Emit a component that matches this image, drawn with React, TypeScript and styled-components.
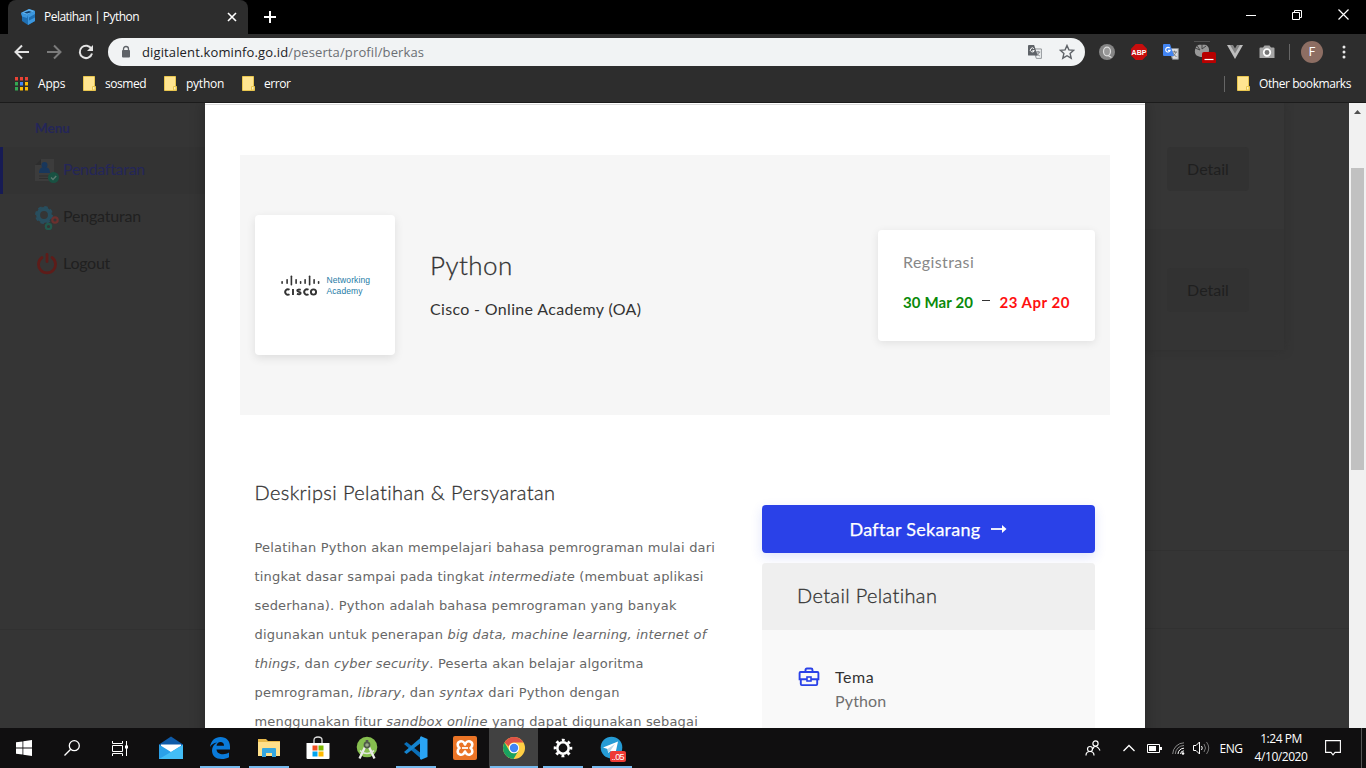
import React from 'react';
import styled, { createGlobalStyle } from 'styled-components';

const GlobalStyle = createGlobalStyle`
  * { box-sizing: border-box; }
  html, body { margin: 0; padding: 0; overflow: hidden; background: #000; }
  svg { display: block; flex: none; }
`;

const uiFont = `"Open Sans", "Noto Sans", sans-serif`;
const siteFont = `Lato, "Open Sans", sans-serif`;

const Screen = styled.div`
  width: 1366px;
  height: 768px;
  display: flex;
  flex-direction: column;
  overflow: hidden;
  font-family: ${uiFont};
`;

/* Text whose tracking is tuned per use */
const Label = styled.span<{ $track?: number }>`
  letter-spacing: ${(p) => p.$track ?? 0}px;
  white-space: nowrap;
`;

/* ---------- browser frame ---------- */
const TabStrip = styled.div`
  height: 34px;
  flex: none;
  display: flex;
  background: #000;
  padding-left: 8px;
`;
const Tab = styled.div`
  width: 240px;
  display: flex;
  align-items: center;
  background: #2d2d2d;
  border-radius: 8px 8px 0 0;
  padding: 0 10px 0 12px;
  color: #fff;
  font-size: 12px;
`;
const TabTitle = styled.div`
  flex: 1;
  margin-left: 8px;
  line-height: 34px;
`;
const NewTab = styled.div`
  flex: 1;
  display: flex;
  align-items: center;
  padding-left: 15px;
`;
const WindowButtons = styled.div`
  display: flex;
  width: 138px;
  height: 29px;
`;
const WindowButton = styled.div`
  width: 46px;
  display: flex;
  align-items: center;
  justify-content: center;
`;

const Toolbar = styled.div`
  height: 36px;
  flex: none;
  display: flex;
  align-items: center;
  background: #2d2d2d;
  padding-left: 6px;
`;
const ToolCell = styled.div<{ $w?: number }>`
  width: ${(p) => p.$w ?? 32}px;
  height: 32px;
  flex: none;
  display: flex;
  align-items: center;
  justify-content: center;
`;
const Omnibox = styled.div`
  width: 977px;
  height: 28px;
  margin: 0 6px;
  border-radius: 14px;
  background: #f1f3f4;
  display: flex;
  align-items: center;
  padding: 0 2px 0 12px;
`;
const Url = styled.div`
  flex: 1;
  margin-left: 10px;
  font-size: 13px;
  line-height: 28px;
  color: #202124;
  em { font-style: normal; color: #6a6e73; }
`;
const Divider = styled.i<{ $h: number; $after?: number }>`
  width: 1px;
  height: ${(p) => p.$h}px;
  margin-right: ${(p) => p.$after ?? 0}px;
  background: #666;
`;
const Avatar = styled.div`
  width: 22px;
  height: 22px;
  border-radius: 50%;
  background: #8d6e63;
  color: #fff;
  font: 12px/22px Roboto, sans-serif;
  text-align: center;
`;

const Bookmarks = styled.div`
  height: 33px;
  flex: none;
  display: flex;
  align-items: center;
  background: #2d2d2d;
  border-bottom: 1px solid #1b1b1b;
  padding: 0 15px 5px;
  color: #fff;
  font-size: 12px;
`;
const Bookmark = styled.div<{ $w?: number; $gap: number }>`
  display: flex;
  align-items: center;
  gap: ${(p) => p.$gap}px;
  width: ${(p) => (p.$w ? p.$w + 'px' : 'auto')};
`;
const Spacer = styled.div`flex: 1;`;

/* ---------- page ---------- */
const Viewport = styled.div`
  height: 625px;
  flex: none;
  display: grid;
  grid-template-columns: 205px 940px 204px 17px;
  overflow: hidden;
  background: #353535;
  font-family: ${siteFont};
  font-variant-ligatures: none;
`;
const Sidebar = styled.aside`
  display: flex;
  flex-direction: column;
  font-size: 16px;
`;
const MenuTitle = styled.div`
  height: 44px;
  padding: 13px 0 0 35px;
  font-size: 13.5px;
  font-weight: 700;
  line-height: 24px;
  color: #242659;
`;
const MenuItem = styled.div<{ $active?: boolean }>`
  height: 47px;
  display: flex;
  align-items: center;
  gap: 4px;
  padding-left: 32px;
  border-left: 3px solid ${(p) => (p.$active ? '#171b54' : 'transparent')};
  background: ${(p) => (p.$active ? '#333' : 'transparent')};
  color: ${(p) => (p.$active ? '#242659' : '#202020')};
`;
const MenuLabel = styled(Label)`
  padding-bottom: 4px;
`;
const SideFooter = styled.div`
  margin-top: 341px;
  border-top: 1px solid #313131;
`;

const Modal = styled.main`
  position: relative;
  background: #fff;
  box-shadow: 0 0 14px rgba(0, 0, 0, 0.3);
  padding: 1px 0 0;
`;
const ModalRule = styled.div`
  height: 1px;
  background: #dcdcdc;
`;
const Hero = styled.section`
  margin: 50px 35px 0;
  height: 260px;
  padding: 0 15px;
  background: #f6f6f6;
  display: flex;
  align-items: center;
  color: #333;
`;
const LogoCard = styled.div`
  width: 140px;
  height: 140px;
  border-radius: 4px;
  background: #fff;
  box-shadow: 0 3px 10px rgba(0, 0, 0, 0.1);
  display: flex;
  align-items: center;
  justify-content: center;
  padding: 3px 0 0 3px;
`;
const HeroText = styled.div`
  flex: 1;
  margin-left: 35px;
  display: flex;
  flex-direction: column;
  gap: 14px;
  padding-bottom: 2px;
`;
const HeroTitle = styled.h1`
  margin: 0;
  font-size: 26px;
  font-weight: 300;
  line-height: 36px;
  -webkit-text-stroke: 0.3px #333;
`;
const HeroSub = styled.div`
  font-size: 16px;
  line-height: 24px;
`;
const DateCard = styled.div`
  width: 217px;
  height: 111px;
  margin-top: 1px;
  border-radius: 4px;
  background: #fff;
  box-shadow: 0 2px 8px rgba(0, 0, 0, 0.09);
  padding: 20px 25px 0;
  font-size: 16px;
  line-height: 24px;
  color: #888;
`;
const Dates = styled.div`
  display: flex;
  margin-top: 16px;
  font-size: 15px;
  font-weight: 700;
`;
const DateText = styled(Label)<{ $color: string }>`
  color: ${(p) => p.$color};
`;
const Dash = styled.i`
  width: 8px;
  height: 1px;
  margin: 10px 9.5px 0 9px;
  background: #333;
`;

const Columns = styled.div`
  display: flex;
  justify-content: space-between;
  padding: 0 50px 0 49.5px;
`;
const Description = styled.article`
  width: 480px;
  padding-top: 62px;
`;
const SectionTitle = styled.h2`
  margin: 0;
  font-size: 20px;
  font-weight: 300;
  line-height: 30px;
  color: #333;
  -webkit-text-stroke: 0.3px #333;
`;
const Paragraph = styled.p`
  margin: 26px 0 0;
  font-family: "DejaVu Sans", sans-serif;
  font-size: 13px;
  line-height: 29px;
  color: #666;
`;
const Line = styled.span<{ $track: number }>`
  display: block;
  white-space: nowrap;
  letter-spacing: ${(p) => p.$track}px;
`;
const Side = styled.aside`
  width: 333px;
  padding-top: 90px;
`;
const Apply = styled.div`
  height: 48px;
  border-radius: 4px;
  background: #2a41e8;
  box-shadow: 0 4px 12px rgba(42, 65, 232, 0.15);
  color: #fff;
  font-size: 18px;
  -webkit-text-stroke: 0.25px #fff;
  display: flex;
  align-items: center;
  justify-content: center;
  gap: 11px;
`;
const DetailBox = styled.div`
  margin-top: 10px;
  border-radius: 4px;
  background: #f9f9f9;
  height: 200px;
`;
const DetailHead = styled.div`
  height: 67px;
  border-radius: 4px 4px 0 0;
  background: #efefef;
  padding-left: 35px;
  font-size: 20px;
  font-weight: 300;
  line-height: 65px;
  color: #333;
  -webkit-text-stroke: 0.3px #333;
`;
const DetailRow = styled.div`
  display: flex;
  padding: 35px 0 0 36px;
  gap: 15px;
  font-size: 16px;
  line-height: 24px;
  color: #333;
  svg { margin-top: 2px; }
`;
const DetailValue = styled.div`color: #707070;`;

const Behind = styled.div`
  display: flex;
  flex-direction: column;
`;
const Card = styled.div`
  width: 139px;
  height: 247px;
  background: #363636;
  border-radius: 0 0 4px 0;
  box-shadow: 0 0 8px #2f2f2f;
`;
const CardRow = styled.div<{ $h: number; $top: number }>`
  height: ${(p) => p.$h}px;
  padding: ${(p) => p.$top}px 0 0 22px;
  background: ${(p) => (p.$top === 44 ? '#363636' : '#343434')};
`;
const DetailButton = styled.div`
  width: 82px;
  height: 44px;
  border-radius: 4px;
  background: #323232;
  color: #1f1f1f;
  font-size: 16px;
  line-height: 43px;
  text-align: center;
`;
const BehindFooter = styled.div`
  margin-top: 200px;
  height: 79px;
  border-top: 1px solid #313131;
  border-bottom: 1px solid #313131;
`;

const Scrollbar = styled.div`
  background: #f1f1f1;
  display: flex;
  flex-direction: column;
  align-items: center;
`;
const Arrow = styled.div`
  height: 17px;
  display: flex;
  align-items: center;
`;
const Thumb = styled.div`
  width: 13px;
  height: 302px;
  margin-top: 48px;
  margin-bottom: auto;
  background: #c1c1c1;
`;

/* ---------- taskbar ---------- */
const Taskbar = styled.footer`
  height: 40px;
  flex: none;
  display: flex;
  background: #100f10;
  color: #fff;
  font-size: 12px;
`;
const TaskCell = styled.div<{ $w: number; $active?: boolean }>`
  width: ${(p) => p.$w}px;
  display: flex;
  align-items: center;
  justify-content: center;
  background: ${(p) => (p.$active ? '#414141' : 'transparent')};
`;
const AppCell = styled(TaskCell)<{ $open?: boolean; $line?: number }>`
  flex-direction: column;
  justify-content: space-between;
  &::before {
    content: '';
    height: 2px;
  }
  &::after {
    content: '';
    width: ${(p) => p.$line ?? 40}px;
    height: 2px;
    background: ${(p) => (p.$open ? '#76b9ed' : 'transparent')};
  }
`;
const Tray = styled.div`
  margin-left: auto;
  display: flex;
  align-items: center;
`;
const Clock = styled.div`
  width: 57px;
  text-align: center;
  font-size: 12px;
  line-height: 18px;
  padding-right: 3px;
`;
const ShowDesktop = styled.div`
  width: 5px;
  height: 40px;
  border-left: 1px solid #555;
`;

/* ---------- drawings ---------- */
const Favicon = () => (
  <svg width="16" height="16" viewBox="0 0 16 16">
    <path d="M1 4 9 0l6 2v10l-7 4-6-4V7z" fill="#1f6fb2" />
    <path d="M1 4 9 0l6 2-8 4z" fill="#5bb0ee" />
    <path d="M4 3.5 9 2l3 1-5 1.6z" fill="#123f6b" />
    <path d="m1 4 6 2v3L2 7.500z M7 6l8-4v3L9 8.500v3l6-3v3.500L8 16V9z" fill="#3c97de" />
  </svg>
);
const FolderNote = () => (
  <svg width="13" height="15" viewBox="0 0 13 15">
    <path d="M.5.5h11v10h1v4H.5z" fill="#ffe591" stroke="#e9c64f" />
    <path d="M9.500 10.500h2.500v3.500h-2.500z" fill="#fff0b8" stroke="#e9c64f" />
  </svg>
);
const AppsGrid = () => {
  const colors = ['#ea4335', '#ea4335', '#ea4335', '#34a853', '#4285f4', '#fbbc05', '#34a853', '#fbbc05', '#fbbc05'];
  return (
    <svg width="13" height="14" viewBox="0 0 13 14">
      {colors.map((c, i) => (
        <rect key={i} x={(i % 3) * 5} y={Math.floor(i / 3) * 5} width="3" height="3.500" fill={c} />
      ))}
    </svg>
  );
};
const Translate = ({ color, size = 16 }: { color: string; size?: number }) => (
  <svg width={size} height={size} viewBox="0 0 16 16">
    <path d="M6 4.500h9.300v10.800H9.500z" fill={color === '#5f6368' ? '#f1f3f4' : '#dadce0'} stroke="#85898d" />
    <path d="M9 8h5M11.500 6.700V8M13 8c-.5 2-2 3.500-3.500 4.300M10 9c.6 1.600 2 3 3.500 3.500" fill="none" stroke="#73777b" />
    <path d="M0 1q0-1 1-1h6l4 12H1q-1 0-1-1z" fill={color} />
    <path d="M6.800 4.200a2.300 2.300 0 1 0 .4 2.200H5" fill="none" stroke="#fff" strokeWidth="1.100" />
  </svg>
);
const CiscoLogo = () => {
  const bars = [[0, 6, 3], [5, 4, 5], [9.3, 0.5, 10], [14, 4, 5], [18.5, 6, 3], [23, 4, 5], [27.5, 0.5, 10], [32, 4, 5], [36.5, 6, 3]];
  return (
    <svg width="92" height="24" viewBox="0 0 92 24">
      {bars.map(([x, y, h], i) => (
        <rect key={i} x={x + 0.3} y={y} width="1.600" height={h} rx=".7" fill="#333" />
      ))}
      <g fill="none" stroke="#333" strokeWidth="1.900">
        <path d="M8.500 14.800a2.700 2.700 0 1 0 0 4.400M12 14v6M19.700 14.900c-1.300-.5-3.500-.6-3.500.7 0 1.600 3.500.8 3.500 2.500 0 1.500-2.300 1.300-3.800.8M27.500 14.800a2.700 2.700 0 1 0 0 4.400" />
        <circle cx="32.500" cy="17" r="2.600" />
      </g>
      <text x="45.500" y="8.200" fontFamily="Liberation Sans, sans-serif" fontSize="8.500" textLength="43.500" fill="#1d7ba6">Networking</text>
      <text x="45.500" y="18.500" fontFamily="Liberation Sans, sans-serif" fontSize="8.500" textLength="36" fill="#1d7ba6">Academy</text>
    </svg>
  );
};
const RegIcon = () => (
  <svg width="24" height="24" viewBox="0 0 24 24">
    <path d="M0 6 6 0h13v22H0z" fill="#3c3c3c" />
    <path d="M0 6 6 0v6z" fill="#2d2d2d" />
    <path d="M4 17h12M4 19.500h9" stroke="#2f2f2f" />
    <circle cx="9.500" cy="6" r="3" fill="#18375c" />
    <path d="M4 14c0-4 2-6 5.500-6s5.500 2 5.500 6z" fill="#18375c" />
    <circle cx="18.500" cy="18.500" r="5.500" fill="#195142" />
    <path d="m16 18.500 2 2 3.200-3.500" stroke="#5b7a70" strokeWidth="1.400" fill="none" />
  </svg>
);
const GearsIcon = () => (
  <svg width="24" height="24" viewBox="0 0 24 24" fill="none">
    <circle cx="9" cy="9" r="5.900" stroke="#284e5e" strokeWidth="4" />
    <circle cx="9" cy="9" r="8" stroke="#284e5e" strokeWidth="2" strokeDasharray="3.600 2.680" />
    <circle cx="20" cy="14" r="2.700" stroke="#6b302e" strokeWidth="2.200" />
    <circle cx="13.500" cy="20.500" r="2.700" stroke="#22594d" strokeWidth="2.200" />
  </svg>
);
const PowerIcon = () => (
  <svg width="24" height="24" viewBox="0 0 24 24" fill="none" stroke="#5e1c19" strokeWidth="2.800" strokeLinecap="round">
    <path d="M7 4.500a8.500 8.500 0 1 0 10 0M12 1.500v7" />
  </svg>
);
const Briefcase = () => (
  <svg width="22" height="20" viewBox="0 0 22 20" fill="none" stroke="#2a41e8" strokeWidth="1.900">
    <path d="M7.500 5V3q0-1.500 1.500-1.500h4q1.500 0 1.500 1.500v2" />
    <path d="M2.500 5h17q.9 0 .9.900v6.300H1.600V5.900q0-.9.900-.9zM2.800 12.500v4.600q0 1 1 1h14.400q1 0 1-1v-4.600" />
    <rect x="9" y="10" width="4" height="4" fill="#f9f9f9" strokeWidth="1.600" />
  </svg>
);

const MailIcon = () => (
  <svg width="24" height="24" viewBox="0 0 24 24">
    <path d="m0 8.500 12-8 12 8V23H0z" fill="#0f5ba8" />
    <path d="M2 8.500h20v8H2z" fill="#fff" />
    <path d="m0 8.500 12 7.500L24 8.500V23H0z" fill="#2ba0e8" />
    <path d="m0 23 24-14v14z" fill="#43bdf6" />
  </svg>
);
const EdgeIcon = () => (
  <svg width="22" height="24" viewBox="0 0 22 24">
    <path d="M1 11C2 4.500 6 1 11.500 1 17.500 1 21 5 21 10.500v3H7.500c.2 3.200 3 4.800 6.500 4.800 2.300 0 4.300-.6 6-1.700v4.600C18 22.300 15.600 23 12.700 23 6.500 23 3 19.500 3 14.500c0-3.500 2-6.500 5-8C4.800 7 2.500 8.500 1 11zm6.500-1.300H15C15 7.300 13.700 6 11.500 6s-3.600 1.400-4 3.700z" fill="#0a7ad9" />
  </svg>
);
const ExplorerIcon = () => (
  <svg width="22" height="20" viewBox="0 1 22 20">
    <path d="M0 2h8l2 2h12v15H0z" fill="#e8b94a" />
    <path d="M0 5h22v14H0z" fill="#ffe08a" />
    <path d="M4 12q0-1 1-1h12q1 0 1 1v8h-4v-4H8v4H4z" fill="#35a7df" />
  </svg>
);
const StoreIcon = () => (
  <svg width="24" height="24" viewBox="0 0 24 24">
    <path d="M8 7V4q0-3 4-3t4 3v3" fill="none" stroke="#ddd" strokeWidth="1.300" />
    <path d="M.5 7h23v15q0 1-1 1h-21q-1 0-1-1z" fill="#fff" />
    <path d="M6.500 9.500h5v5h-5z" fill="#f25022" /><path d="M12.500 9.500h5v5h-5z" fill="#7fba00" />
    <path d="M6.500 15.500h5v5h-5z" fill="#00a4ef" /><path d="M12.500 15.500h5v5h-5z" fill="#ffb900" />
  </svg>
);
const AndroidStudio = () => (
  <svg width="22" height="24" viewBox="0 0 22 24">
    <circle cx="11" cy="11" r="10.300" fill="#86be4f" />
    <path d="M9.500 10 3.500 22.500M12.500 10l6 12.500" stroke="#ececec" strokeWidth="2.300" />
    <path d="M4 14.500c4 4 10 4 14 0" stroke="#dfe5da" strokeWidth="1.600" fill="none" />
    <path d="M11 4v4" stroke="#555" strokeWidth="2.600" />
    <circle cx="11" cy="9" r="2.600" fill="#9aa88c" stroke="#4f5a48" strokeWidth="1.600" />
  </svg>
);
const CodeIcon = () => (
  <svg width="25" height="24" viewBox="0 0 25 24">
    <path d="m1 8 2.500-2L19 18v5.500z" fill="#0b6fb8" />
    <path d="m1 16 2.500 2L19 6V.5z" fill="#1584cf" />
    <path d="m18 .3 6.500 2.700v18L18 23.700l-1-1V1.300z" fill="#2aa4f4" />
  </svg>
);
const XamppIcon = () => (
  <svg width="24" height="24" viewBox="0 0 24 24">
    <rect width="24" height="24" rx="2" fill="#ea7426" />
    <path d="M12 8.500C11 5.500 8.500 5 7 5.500 4 6.500 4 10.500 6.500 12 4 13.500 4 17.500 7 18.500c1.500.5 4 0 5-3 1 3 3.500 3.500 5 3 3-1 3-5 .5-6.500 2.500-1.500 2.500-5.500-.5-6.500-1.500-.5-4 0-5 3z" fill="none" stroke="#fff" strokeWidth="2.600" strokeLinejoin="round" />
    <path d="M9 12h6" stroke="#fff" strokeWidth="1.800" />
  </svg>
);
const ChromeIcon = () => (
  <svg width="22" height="22" viewBox="0 0 22 22">
    <circle cx="11" cy="11" r="11" fill="#ffce44" />
    <path d="M1.500 5.500A11 11 0 0 1 20.500 5.500H11a5.500 5.500 0 0 0-5.300 4z" fill="#de5246" />
    <path d="M1.500 5.500A11 11 0 0 0 10.500 22l5-8.300a5.300 5.300 0 0 1-9.200 0z" fill="#1aa260" />
    <circle cx="11" cy="11" r="5.200" fill="#fff" /><circle cx="11" cy="11" r="4.200" fill="#4285f4" />
  </svg>
);
const SettingsIcon = () => (
  <svg width="20" height="22" viewBox="0 0 20 22" fill="none" stroke="#fff">
    <circle cx="10" cy="11" r="5.700" strokeWidth="2.600" />
    <circle cx="10" cy="11" r="8" strokeWidth="2.600" strokeDasharray="2.900 3.383" strokeDashoffset="1.450" />
  </svg>
);
const TelegramIcon = () => (
  <svg width="28" height="28" viewBox="0 -2 28 28">
    <circle cx="13.500" cy="11.500" r="10.800" fill="#259bd5" />
    <path d="m5 11.500 15-6-2.800 13-4.500-3.500-2.500 2-.7-4z" fill="#fff" />
    <path d="m9.500 13 7.500-5-4.500 6.500-2.300 2.500z" fill="#b9d7e8" />
    <rect x="12" y="15" width="16" height="11" rx="2" fill="#ee3b35" />
    <text x="13.500" y="24" fontFamily="Liberation Sans, sans-serif" fontSize="9" textLength="13" fill="#fff">..05</text>
  </svg>
);

const detailButtons = [{ h: 126, top: 44 }, { h: 121, top: 39 }];
const extraIcons = [
  <svg key="q" width="16" height="16" viewBox="0 0 16 16"><circle cx="8" cy="8" r="8" fill="#858585" /><ellipse cx="8" cy="7.500" rx="3.500" ry="4.300" fill="#999" stroke="#ddd" strokeWidth="1.200" /><path d="m9 11.500 3.500 2" stroke="#ddd" strokeWidth="1.200" /></svg>,
  <svg key="abp" width="20" height="16" viewBox="-2 0 20 16"><path d="M4.700 0h6.600L16 4.700v6.600L11.300 16H4.700L0 11.300V4.700z" fill="#c70d0d" /><text x="8" y="10.800" textAnchor="middle" fontFamily="Liberation Sans, sans-serif" fontWeight="700" fontSize="7" fill="#fff">ABP</text></svg>,
  <Translate key="tr" color="#4285f4" />,
  <svg key="bug" width="28" height="22" viewBox="-1 -3 28 22"><path d="M4-2.500h16" stroke="#505050" /><path d="M5 6c1-5 4-6 7-5 4-1 7 1 7 5s-3 7-7 7-8-2-7-7z" fill="#999" /><path d="M7 1.500 10 6 5 4M12 0v5l4-3" stroke="#444" fill="none" /><rect x="12" y="8" width="14" height="11.500" rx="2" fill="#b80000" /><path d="M14.500 15.500H23.500" stroke="#fff" strokeWidth="1.200" /></svg>,
  <svg key="vue" width="16" height="14" viewBox="0 0 16 14"><path d="M0 0h5l3 5 3-5h5L8 14z" fill="#bdbdbd" /><path d="M3 0h3l2 3.500L10 0h3L8 8.500z" fill="#858585" /></svg>,
  <svg key="cam" width="16" height="14" viewBox="0 0 16 14"><path d="M1.500 2.500H4L5.500.5h5L12 2.500h2.500q1 0 1 1V13H.5V3.500q0-1 1-1z" fill="#a6a6a6" /><circle cx="8" cy="7.500" r="3.300" fill="#777" stroke="#fff" strokeWidth="1.700" /></svg>,
];

export default function App() {
  return (
    <Screen>
      <GlobalStyle />
      <TabStrip>
        <Tab>
          <Favicon />
          <TabTitle><Label $track={-0.53}>Pelatihan | Python</Label></TabTitle>
          <svg width="12" height="12" viewBox="0 0 12 12"><path d="m2 2 8 8M10 2l-8 8" stroke="#fff" strokeWidth="1.600" /></svg>
        </Tab>
        <NewTab><svg width="14" height="14" viewBox="0 0 14 14"><path d="M7 1v12M1 7h12" stroke="#fff" strokeWidth="2" /></svg></NewTab>
        <WindowButtons>
          <WindowButton><svg width="10" height="10"><path d="M0 5.500h10" stroke="#fff" /></svg></WindowButton>
          <WindowButton><svg width="10" height="10" fill="none" stroke="#fff"><path d="M.5 2.500h7v7h-7zM2.500 2.500v-2h7v7h-2" /></svg></WindowButton>
          <WindowButton><svg width="11" height="11"><path d="m.5.5 10 10M10.500.5l-10 10" stroke="#fff" strokeWidth="1.200" /></svg></WindowButton>
        </WindowButtons>
      </TabStrip>

      <Toolbar>
        <ToolCell><svg width="16" height="16" viewBox="0 0 16 16" fill="none" stroke="#e4e4e4" strokeWidth="2"><path d="M15 8H2.500M8 1.500 1.500 8 8 14.500" /></svg></ToolCell>
        <ToolCell><svg width="16" height="16" viewBox="0 0 16 16" fill="none" stroke="#7b7b7b" strokeWidth="2"><path d="M1 8h12.500M8 1.500 14.500 8 8 14.500" /></svg></ToolCell>
        <ToolCell><svg width="16" height="16" viewBox="0 0 16 16"><path d="M13.500 5A6.200 6.200 0 1 0 14 9.500" fill="none" stroke="#e4e4e4" strokeWidth="2" /><path d="M15 1v6H9z" fill="#e4e4e4" /></svg></ToolCell>
        <Omnibox>
          <svg width="12" height="14" viewBox="0 0 12 14"><rect x="2" y="5" width="8" height="7.500" rx="1" fill="#5f6368" /><path d="M3.500 6V4q0-2.500 2.500-2.500T8.500 4v2" fill="none" stroke="#5f6368" strokeWidth="1.300" /></svg>
          <Url><Label $track={0.13}>digitalent.kominfo.go.id<em>/peserta/profil/berkas</em></Label></Url>
          <ToolCell><Translate color="#5f6368" size={14} /></ToolCell>
          <ToolCell><svg width="16" height="16" viewBox="0 0 16 16"><path d="m8 1.500 1.900 4.400 4.800.4-3.600 3.200 1.100 4.700L8 11.700l-4.200 2.500 1.100-4.700L1.300 6.300l4.800-.4z" fill="none" stroke="#5f6368" strokeWidth="1.400" /></svg></ToolCell>
        </Omnibox>
        {extraIcons.map((icon, i) => <ToolCell key={i}>{icon}</ToolCell>)}
        <ToolCell $w={13}><Divider $h={16} /></ToolCell>
        <ToolCell $w={32}><Avatar>F</Avatar></ToolCell>
        <ToolCell $w={32}><svg width="4" height="14" fill="#e8e8e8"><circle cx="2" cy="2" r="1.500" /><circle cx="2" cy="7" r="1.500" /><circle cx="2" cy="12" r="1.500" /></svg></ToolCell>
      </Toolbar>

      <Bookmarks>
        <Bookmark $w={68} $gap={10}><AppsGrid /><Label $track={-0.2}>Apps</Label></Bookmark>
        <Bookmark $w={81} $gap={9}><FolderNote /><Label $track={-0.45}>sosmed</Label></Bookmark>
        <Bookmark $w={78} $gap={9}><FolderNote /><Label $track={-0.25}>python</Label></Bookmark>
        <Bookmark $gap={9}><FolderNote /><Label $track={-0.45}>error</Label></Bookmark>
        <Spacer />
        <Bookmark $gap={9}><Divider $h={16} $after={3} /><FolderNote /><Label $track={-0.44}>Other bookmarks</Label></Bookmark>
      </Bookmarks>

      <Viewport>
        <Sidebar>
          <MenuTitle><Label>Menu</Label></MenuTitle>
          <MenuItem $active><RegIcon /><MenuLabel $track={-0.3}>Pendaftaran</MenuLabel></MenuItem>
          <MenuItem><GearsIcon /><MenuLabel $track={-0.2}>Pengaturan</MenuLabel></MenuItem>
          <MenuItem><PowerIcon /><MenuLabel $track={-0.25}>Logout</MenuLabel></MenuItem>
          <SideFooter />
        </Sidebar>

        <Modal>
          <ModalRule />
          <Hero>
            <LogoCard><CiscoLogo /></LogoCard>
            <HeroText>
              <HeroTitle><Label $track={0.45}>Python</Label></HeroTitle>
              <HeroSub><Label $track={0.33}>Cisco - Online Academy (OA)</Label></HeroSub>
            </HeroText>
            <DateCard>
              <Label $track={0.4}>Registrasi</Label>
              <Dates>
                <DateText $color="#0a8a0a" $track={0.12}>30 Mar 20</DateText>
                <Dash />
                <DateText $color="#ff1010" $track={0.5}>23 Apr 20</DateText>
              </Dates>
            </DateCard>
          </Hero>
          <Columns>
            <Description>
              <SectionTitle><Label $track={0.4}>Deskripsi Pelatihan &amp; Persyaratan</Label></SectionTitle>
              <Paragraph>
                <Line $track={0.2}>Pelatihan Python akan mempelajari bahasa pemrograman mulai dari</Line>
                <Line $track={0.19}>tingkat dasar sampai pada tingkat <em>intermediate</em> (membuat aplikasi</Line>
                <Line $track={0.2}>sederhana). Python adalah bahasa pemrograman yang banyak</Line>
                <Line $track={0.19}>digunakan untuk penerapan <em>big data, machine learning, internet of</em></Line>
                <Line $track={0.2}><em>things</em>, dan <em>cyber security</em>. Peserta akan belajar algoritma</Line>
                <Line $track={0.21}>pemrograman, <em>library</em>, dan <em>syntax</em> dari Python dengan</Line>
                <Line $track={0.18}>menggunakan fitur <em>sandbox online</em> yang dapat digunakan sebagai</Line>
              </Paragraph>
            </Description>
            <Side>
              <Apply>
                <Label $track={0.27}>Daftar Sekarang</Label>
                <svg width="16" height="10" viewBox="0 0 16 10"><path d="M0 5h12" stroke="#fff" strokeWidth="1.800" /><path d="m11 1 4.500 4L11 9z" fill="#fff" /></svg>
              </Apply>
              <DetailBox>
                <DetailHead><Label $track={0.35}>Detail Pelatihan</Label></DetailHead>
                <DetailRow>
                  <Briefcase />
                  <div><Label $track={0.55}>Tema</Label><DetailValue><Label $track={0.15}>Python</Label></DetailValue></div>
                </DetailRow>
              </DetailBox>
            </Side>
          </Columns>
        </Modal>

        <Behind>
          <Card>
            {detailButtons.map((b) => (
              <CardRow key={b.top} $h={b.h} $top={b.top}><DetailButton><Label>Detail</Label></DetailButton></CardRow>
            ))}
          </Card>
          <BehindFooter />
        </Behind>

        <Scrollbar>
          <Arrow><svg width="7" height="4"><path d="M0 4 3.500 0 7 4z" fill="#505050" /></svg></Arrow>
          <Thumb />
          <Arrow><svg width="7" height="4"><path d="M0 0h7L3.500 4z" fill="#505050" /></svg></Arrow>
        </Scrollbar>
      </Viewport>

      <Taskbar>
        <TaskCell $w={48}><svg width="16" height="16" viewBox="0 0 16 16" fill="#fff"><path d="M0 2.300 6.500 1.400v6.200H0zM7.300 1.300 16 0v7.600H7.300zM0 8.400h6.500v6.200L0 13.700zM7.300 8.400H16V16l-8.700-1.300z" /></svg></TaskCell>
        <TaskCell $w={48}><svg width="16" height="16" viewBox="0 0 16 16" fill="none" stroke="#fff" strokeWidth="1.300"><circle cx="10.300" cy="5.700" r="5" /><path d="M6.700 9.300.5 15.500" /></svg></TaskCell>
        <TaskCell $w={49}><svg width="17" height="15" viewBox="0 0 17 15" fill="none" stroke="#fff"><path d="M.5 0v2.500h10V0M.5 15v-2.500h10V15M.5 4.500h10v6H.5zM14.500 0v15" /><path d="M13 4.500h3v3h-3z" fill="#fff" stroke="none" /></svg></TaskCell>
        <TaskCell $w={1} />
        <AppCell $w={49}><MailIcon /></AppCell>
        <AppCell $w={49} $open><EdgeIcon /></AppCell>
        <AppCell $w={49} $open><ExplorerIcon /></AppCell>
        <AppCell $w={49}><StoreIcon /></AppCell>
        <AppCell $w={49}><AndroidStudio /></AppCell>
        <AppCell $w={49} $open><CodeIcon /></AppCell>
        <AppCell $w={49}><XamppIcon /></AppCell>
        <AppCell $w={49} $open $active $line={48}><ChromeIcon /></AppCell>
        <AppCell $w={49} $open><SettingsIcon /></AppCell>
        <AppCell $w={49} $open><TelegramIcon /></AppCell>
        <Tray>
          <TaskCell $w={38}><svg width="16" height="16" viewBox="0 0 16 16" fill="none" stroke="#fff" strokeWidth="1.200"><circle cx="10.500" cy="3.500" r="2.600" /><path d="M8 9q0-2.500 2.500-2.500T15 10.500" /><circle cx="5" cy="9" r="2.500" /><path d="M1 15.500q0-4 4-4t4 4" /></svg></TaskCell>
          <TaskCell $w={34}><svg width="12" height="8" fill="none" stroke="#fff" strokeWidth="1.300"><path d="m.5 7 5.500-5.500L11.500 7" /></svg></TaskCell>
          <TaskCell $w={16}><svg width="15" height="9"><path d="M.5.500h12v8H.5z" fill="none" stroke="#fff" /><path d="M2 2h7v5H2zM13 3h2v3h-2z" fill="#fff" /></svg></TaskCell>
          <TaskCell $w={32}><svg width="13" height="13" viewBox="0 0 13 13" fill="none"><path d="M.7 12A11.500 11.500 0 0 1 12 .8M3.300 12A8.800 8.800 0 0 1 12 3.500" stroke="#888" /><path d="M6 12a6 6 0 0 1 6-5.800M8.500 12A3.500 3.500 0 0 1 12 8.800" stroke="#fff" /><circle cx="11" cy="11.500" r="1.300" fill="#fff" /></svg></TaskCell>
          <TaskCell $w={14}><svg width="17" height="14" viewBox="0 0 17 14" fill="none" stroke="#fff"><path d="M.5 4.500h2.500L6.500 1v12L3 9.500H.5zM8.500 5q1.500 2 0 4" /><path d="M11 3q3 4 0 8M13.500 1q4.500 6 0 12" stroke="#777" /></svg></TaskCell>
          <TaskCell $w={46}><Label $track={-0.4}>ENG</Label></TaskCell>
          <Clock><Label $track={-0.45}>1:24 PM</Label><br /><Label $track={-0.45}>4/10/2020</Label></Clock>
          <TaskCell $w={44}><svg width="16" height="16" viewBox="0 0 16 16" fill="none" stroke="#fff" strokeWidth="1.100"><path d="M.6.6h14.800v11.800H10L8 14.800l-2-2.400H.6z" /></svg></TaskCell>
          <TaskCell $w={6} />
          <ShowDesktop />
        </Tray>
      </Taskbar>
    </Screen>
  );
}
